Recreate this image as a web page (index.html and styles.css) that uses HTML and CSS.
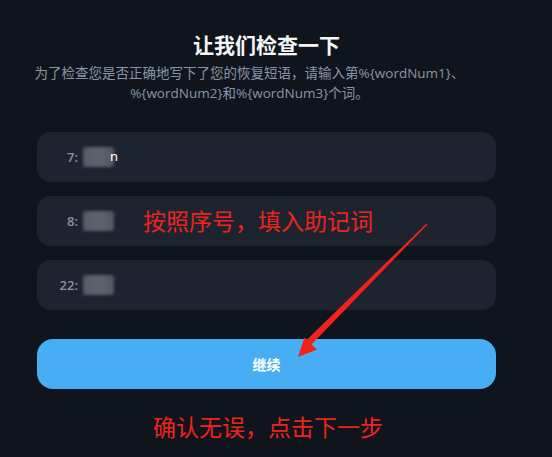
FILE: index.html
```html
<!DOCTYPE html>
<html lang="zh-CN">
<head>
<meta charset="utf-8">
<title>让我们检查一下</title>
<link rel="stylesheet" href="styles.css">
</head>
<body>
<main class="page">
  <h1 class="title">让我们检查一下</h1>
  <p class="subtitle">为了检查您是否正确地写下了您的恢复短语，请输入第%{wordNum1}、<br>%{wordNum2}和%{wordNum3}个词。</p>
  <div class="fields">
    <div class="field"><span class="num">7:</span><span class="blur"></span><span class="tail">n</span></div>
    <div class="field"><span class="num">8:</span><span class="blur"></span></div>
    <div class="field"><span class="num">22:</span><span class="blur"></span></div>
  </div>
  <button class="continue">继续</button>
</main>
<div class="note note-1">按照序号，填入助记词</div>
<div class="note note-2">确认无误，点击下一步</div>
<svg class="arrow" width="552" height="457" viewBox="0 0 552 457">
  <polygon points="427.5,224.5 426.5,223.5 306,340.5 311,345" fill="#f0231b"/>
  <polygon points="298,357 304.5,337.5 317,349.5" fill="#f0231b"/>
</svg>
</body>
</html>
```
FILE: styles.css
```css
* { box-sizing: border-box; }
html, body { margin: 0; padding: 0; }
body {
  width: 552px;
  height: 457px;
  background: #10151d;
  font-family: "Open Sans", "Noto Sans CJK SC", sans-serif;
  position: relative;
  overflow: hidden;
}
.page {
  width: 459px;
  margin-left: 37px;
  padding-top: 30px;
  display: flex;
  flex-direction: column;
  align-items: stretch;
}
.title {
  margin: 0;
  text-align: center;
  font-size: 21px;
  line-height: 28px;
  font-weight: 700;
  color: #f4f6f8;
  font-family: "Noto Sans CJK SC", sans-serif;
}
.subtitle {
  margin: 5px 6px 0 -28px;
  text-align: center;
  font-size: 13.5px;
  line-height: 20px;
  color: #8895a7;
}
.fields {
  margin-top: 29px;
  display: flex;
  flex-direction: column;
  gap: 14px;
}
.field {
  height: 50px;
  border-radius: 14px;
  background: #1d2430;
  display: flex;
  align-items: center;
  padding-left: 20px;
}
.num {
  width: 21px;
  text-align: right;
  font-size: 13px;
  font-weight: 600;
  color: #8792a3;
}
.blur {
  width: 31px;
  height: 20px;
  margin-left: 5px;
  border-radius: 3px;
  background: linear-gradient(90deg, #555b64 0%, #5e636c 55%, #50565f 100%);
  filter: blur(1.5px);
}
.tail {
  margin-left: -4px;
  font-size: 13px;
  color: #ffffff;
  font-family: "Noto Sans", sans-serif;
  position: relative;
  top: -1px;
}
.continue {
  margin-top: 29px;
  height: 50px;
  border: 0;
  border-radius: 16px;
  background: #47aef4;
  color: #ffffff;
  font-size: 14px;
  font-weight: 700;
  font-family: "Noto Sans CJK SC", sans-serif;
}
.note {
  position: absolute;
  color: #f0231b;
  font-size: 23px;
  line-height: 24px;
  font-family: "Noto Sans CJK SC", sans-serif;
  white-space: nowrap;
}
.note-1 { left: 143px; top: 208px; }
.note-2 { left: 153px; top: 414px; }
.arrow {
  position: absolute;
  left: 0;
  top: 0;
  pointer-events: none;
}
```
